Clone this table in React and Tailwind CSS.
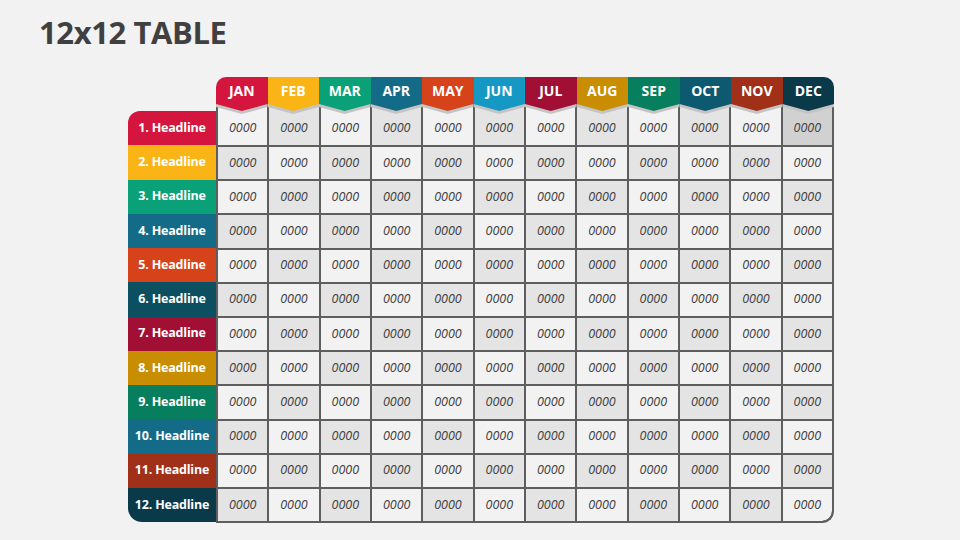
const months = [
  { name: "JAN", color: "bg-[#d4153e]" },
  { name: "FEB", color: "bg-[#fbb416]" },
  { name: "MAR", color: "bg-[#0aa078]" },
  { name: "APR", color: "bg-[#136b87]" },
  { name: "MAY", color: "bg-[#d6431b]" },
  { name: "JUN", color: "bg-[#1598c3]" },
  { name: "JUL", color: "bg-[#a20f35]" },
  { name: "AUG", color: "bg-[#c98d02]" },
  { name: "SEP", color: "bg-[#077e5d]" },
  { name: "OCT", color: "bg-[#0d5a70]" },
  { name: "NOV", color: "bg-[#a03018]" },
  { name: "DEC", color: "bg-[#0a3a4a]" },
];

const headlines = [
  "bg-[#d4153e]",
  "bg-[#fbb416]",
  "bg-[#0aa078]",
  "bg-[#136b87]",
  "bg-[#d6431b]",
  "bg-[#0c4f60]",
  "bg-[#a20f35]",
  "bg-[#c98d02]",
  "bg-[#077e5d]",
  "bg-[#136b87]",
  "bg-[#a03018]",
  "bg-[#0a3a4a]",
];

function cellBg(r, c) {
  if (r === 0 && c === 11) return "bg-[#d2d1d1]";
  return (r + c) % 2 === 1 ? "bg-[#e4e4e4]" : "bg-[#f2f2f2]";
}

export default function App() {
  const rows = Array.from({ length: 12 }, (_, r) => r);

  return (
    <div className="w-[960px] h-[540px] bg-[#f2f2f2] font-['Open_Sans',sans-serif] overflow-hidden">
      <h1 className="pl-[39px] pt-[17px] text-[31px] leading-none font-bold tracking-[-0.4px] text-[#404040]">
        12x12 TABLE
      </h1>

      <div className="flex ml-[128px] mt-[29px]">
        {/* headline column */}
        <div className="w-[88px] flex flex-col">
          <div className="h-[34px]" />
          {headlines.map((bg, i) => (
            <div
              key={i}
              className={`h-[34.25px] flex items-center justify-center text-white font-bold text-[12.5px] tracking-[-0.2px] ${bg} ${
                i === 0 ? "rounded-tl-[12px]" : ""
              } ${i === 11 ? "rounded-bl-[14px]" : ""}`}
            >
              {i + 1}. Headline
            </div>
          ))}
        </div>

        {/* month columns */}
        <div className="w-[618px] flex flex-col">
          <div className="flex relative z-10">
            {months.map((m, i) => (
              <div
                key={m.name}
                className={`relative flex-1 h-[27px] flex items-center justify-center text-white font-bold text-[14px] ${m.color} ${
                  i === 0 ? "rounded-tl-[10px]" : ""
                } ${i === 11 ? "rounded-tr-[10px]" : ""}`}
              >
                {m.name}
                <div className="absolute left-0 right-0 top-[27px] h-[10px] bg-[#c4c4c4] [clip-path:polygon(0_0,100%_0,100%_3px,50%_10px,0_3px)]" />
                <div
                  className={`absolute left-0 right-0 top-[27px] h-[7px] ${m.color} [clip-path:polygon(0_0,100%_0,50%_100%)]`}
                />
              </div>
            ))}
          </div>

          <div className="grid grid-cols-12 gap-[2px] bg-[#5e5e5e] border-x-2 border-b-2 border-[#5e5e5e] rounded-br-[12px] overflow-hidden">
            {rows.map((r) =>
              months.map((m, c) => (
                <div
                  key={`${r}-${c}`}
                  className={`flex items-center justify-center italic text-[12.5px] text-[#404040] ${cellBg(r, c)} ${
                    r === 0 ? "h-[41px] pt-[7px]" : "h-[32.2px]"
                  } ${r === 11 && c === 11 ? "rounded-br-[10px]" : ""}`}
                >
                  0000
                </div>
              ))
            )}
          </div>
        </div>
      </div>
    </div>
  );
}
